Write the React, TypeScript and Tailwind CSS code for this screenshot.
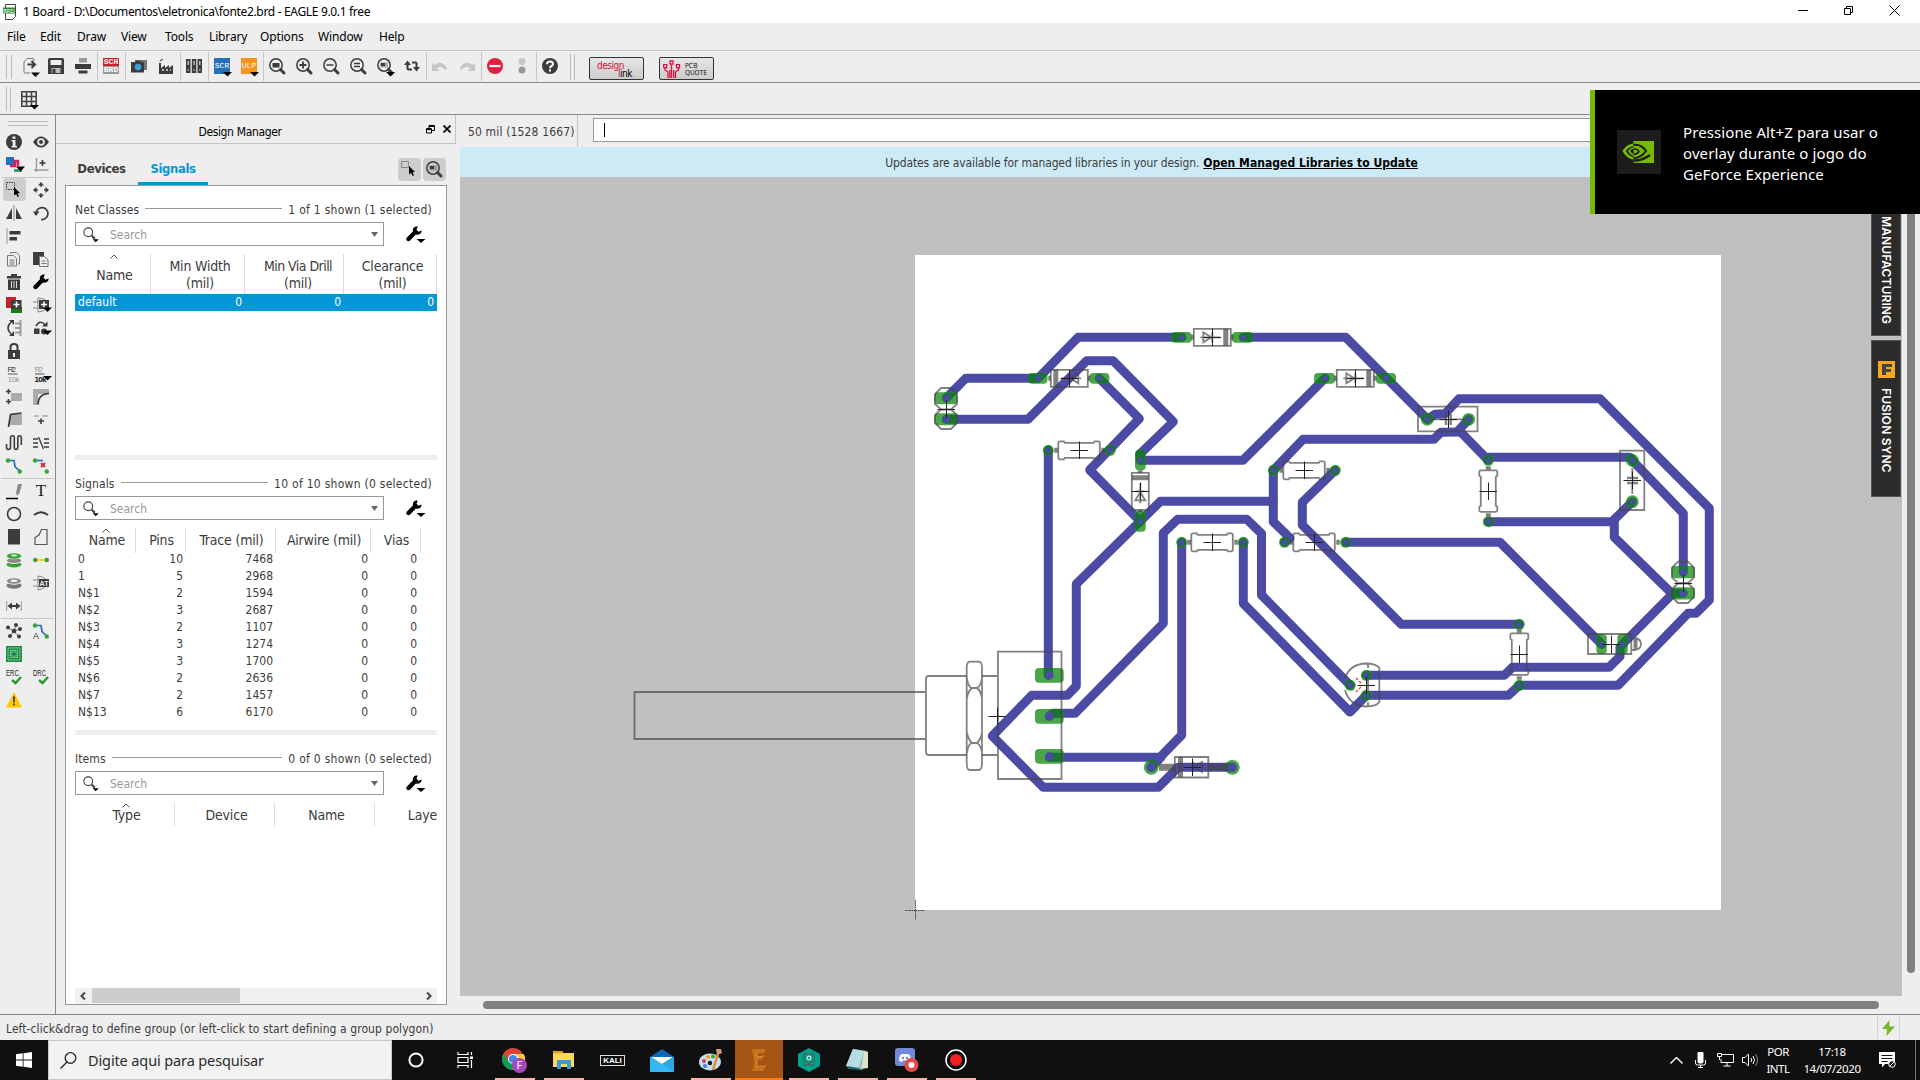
import React from "react";

type Kids = { children?: React.ReactNode };

const I = ({ children, s = 16 }: Kids & { s?: number }) => (
  <svg width={s} height={s} viewBox="0 0 16 16" className="block shrink-0 overflow-visible" fill="none">
    {children}
  </svg>
);
const Drop = () => <path d="M9 14h9l-4.5 4.5z" fill="#000" />;
const K = "#3c3c3c";

/* ---------- main toolbar ---------- */
const Lens = ({ children }: Kids) => (
  <>
    <circle cx="7" cy="7" r="6.2" stroke={K} strokeWidth="1.5" />
    <path d="M11.5 11.5l3.5 3.5" stroke={K} strokeWidth="3" strokeLinecap="round" />
    {children}
  </>
);
const Undo = ({ flip }: { flip?: boolean }) => (
  <g transform={flip ? "translate(16 0) scale(-1 1)" : undefined}>
    <path d="M0 5v8h7.500l-2.500-2.800c2.500-2.200 6-1.500 8.500 2l1.500-2.200c-2.500-5-8-7-12.500-3z" fill="#c6c6c6" />
  </g>
);
type Btn = React.ReactNode | "|";
const toolbar: Btn[] = [
  <I key="export">
    <g transform="translate(2 0)">
      <path d="M11 3V1.500a1 1 0 0 0-1-1H4L1 4v10a1 1 0 0 0 1 1h5" stroke="#777" />
      <path d="M4.500 6.500h6M8.500 3l3.500 3.500-3.500 3.500" stroke={K} strokeWidth="2" />
      <path d="M8 14.500h9l-4.500 4.500z" fill="#000" />
    </g>
  </I>,
  <I key="save">
    <path d="M0 1.500Q0 0 1.500 0h13Q16 0 16 1.500V16H0z" fill={K} />
    <path d="M2.500 2h11v5h-11z" fill="#ededed" />
    <path d="M3.500 10h9v5h-9z" fill="#bbb" />
    <path d="M4.500 11h3v4h-3z" fill={K} />
  </I>,
  <I key="print">
    <path d="M4 0h8v4.500H4z" fill="#999" />
    <path d="M0 6h16v5H0zM3.500 12.500h9v3h-9z" fill={K} />
  </I>,
  "|",
  <div key="sch" className="flex h-4 w-4 flex-col font-['Liberation_Mono',monospace] text-[8px] leading-[8px] font-bold text-white">
    <span className="flex h-2 justify-center bg-[#c8202f]">SCH</span>
    <span className="flex h-2 justify-center bg-[#999]">BRD</span>
  </div>,
  "|",
  <I key="cam">
    <path d="M4 2h12v10H4z" fill="#777" />
    <path d="M0 4h4l1-1.500h4L10 4h3v10.500H0z" fill={K} />
    <circle cx="7" cy="9" r="3.300" fill="#35a0e0" />
  </I>,
  <I key="factory">
    <path d="M1 16V5h2v5l4-3v3l4-3v3l4-3v9z" fill={K} />
    <path d="M2 3.500Q2 1.500 5 1.500" stroke={K} />
    <path d="M4 12h2M8 12h2M12 12h1" stroke="#ddd" strokeWidth="1.500" />
  </I>,
  "|",
  <I key="lib">
    <path d="M0 1h4.500v14H0zM5.800 1h4.500v14H5.800zM11.500 1H16v14h-4.500z" fill={K} />
    <path d="M1.500 3h1.500v4H1.500zM7.300 3h1.500v4H7.300zM13 3h1.500v4H13z" fill="#bbb" />
    <path d="M2.200 11v2M8 11v2M13.800 11v2" stroke="#bbb" />
  </I>,
  "|",
  <div key="scr" className="relative flex h-4 w-4 items-center justify-center bg-[#2670b8] font-['Liberation_Mono',monospace] text-[8px] text-white">
    SCR
    <span className="absolute inset-0"><I><Drop /></I></span>
  </div>,
  <div key="ulp" className="relative flex h-4 w-4 items-center justify-center bg-[#f7931e] font-['Liberation_Mono',monospace] text-[8px] text-white">
    ULP
    <span className="absolute inset-0"><I><Drop /></I></span>
  </div>,
  "|",
  <I key="z1"><Lens><path d="M3.500 5h7v4.500h-7z" fill={K} /></Lens></I>,
  <I key="z2"><Lens><path d="M3.500 7h7M7 3.500v7" stroke={K} strokeWidth="1.800" /></Lens></I>,
  <I key="z3"><Lens><path d="M3.500 7h7" stroke={K} strokeWidth="1.500" /></Lens></I>,
  <I key="z4"><Lens><path d="M4 5.500h6M4 8.500h6" stroke={K} strokeWidth="1.500" /></Lens></I>,
  <I key="z5"><Lens><path d="M3 4.500h8v5H3z" fill="#aaa" /><path d="M4 5h4v3H4z" fill={K} /></Lens><Drop /></I>,
  <I key="ref">
    <path d="M3.500 5v5.500a1 1 0 0 0 1 1H8M12.500 11V5.500a1 1 0 0 0-1-1H8" stroke={K} strokeWidth="2" />
    <path d="M0 7l3.500-4.500L7 7zM9 9l3.500 4.500L16 9z" fill={K} />
  </I>,
  "|",
  <I key="undo"><Undo /></I>,
  <I key="redo"><Undo flip /></I>,
  "|",
  <I key="stop"><circle cx="8" cy="8" r="8" fill="#e0203c" /><path d="M2.500 8h11" stroke="#fff" strokeWidth="2.200" /></I>,
  <I key="go"><circle cx="8" cy="3.500" r="3.500" fill="#c6c6c6" /><circle cx="8" cy="12" r="3.500" fill="#999" /></I>,
  "|",
  <I key="help">
    <circle cx="8" cy="8" r="8" fill={K} />
    <path d="M5 6.200Q5 3.500 8 3.500T11 6Q11 7.200 9.500 8T8 10.200" stroke="#fff" strokeWidth="2" />
    <path d="M7 11.500h2v2H7z" fill="#fff" />
  </I>,
];

/* ---------- left palette ---------- */
const G = "#35a435";
const Wrench = () => (
  <path d="M15.500 4.500l-3 1.200-2-2L11.700.700C8.500 0 6.300 2.500 7 5.300L.700 11.800c-1.500 2 1 4.500 3.200 3l6-6.300c3 .800 6-1 5.600-4z" fill="#000" />
);
const p1: React.ReactNode[] = [
  <I key="0"><circle cx="8" cy="8" r="8" fill={K} /><path d="M6.500 2.500h3v2.300h-3zM5.500 6h4v6H11v1.500H5.500V12h1.200V7.500H5.500z" fill="#eee" /></I>,
  <I key="1"><path d="M0 8q8-11 16 0q-8 11-16 0z" fill={K} /><circle cx="8" cy="8" r="3.800" fill="#eee" /><circle cx="8" cy="8" r="2" fill={K} /></I>,
  <I key="2"><path d="M0 0h8v8H0z" fill="#2670b8" /><path d="M4 9h5V4h3v5" stroke="#d8205c" strokeWidth="2.500" /><path d="M8 13.500h8" stroke="#35a46a" strokeWidth="3" /><path d="M10 9.500h9l-4.500 5z" fill="#000" /></I>,
  <I key="3"><path d="M3.500 1v14M1 13h14.500" stroke="#999" strokeWidth="1.300" /><path d="M6.500 6h6M9.500 3v6" stroke={K} strokeWidth="1.600" /></I>,
];
const p2: React.ReactNode[] = [
  <I key="0"><path d="M.500 .500h8v7h-8z" stroke="#333" strokeDasharray="1.500 1" /><path d="M8 5l6 6-2.500.300 1.500 3-1.300.700-1.500-3L8 13.500z" fill="#000" /></I>,
  <I key="1"><path d="M8 0l3 3.500H5zM8 16l3-3.500H5zM0 8l3.500-3v6zM16 8l-3.500-3v6z" fill={K} /><path d="M8 2v3M8 11v3M2 8h3M11 8h3" stroke={K} strokeWidth="1.300" /></I>,
  <I key="2"><path d="M0 14L6 3v11zM16 14L10 3v11z" fill={K} /><path d="M8 0v16" stroke="#999" strokeWidth="1.200" /></I>,
  <I key="3"><path d="M3 8a6 6 0 1 1 5 6.500" stroke={K} strokeWidth="1.700" /><path d="M0 6.500h6.500L3 11z" fill={K} /></I>,
  <I key="4"><path d="M1 0v16" stroke="#999" /><path d="M3.500 3h11v3.500h-11zM3.500 9h7.500v3.500H3.500z" fill={K} /></I>,
  null,
  <I key="6"><path d="M4.500 3V1.500h6l3 3V13H12" stroke="#777" /><path d="M1.500 4.500h6l3 3V15h-9zM3.500 9h5M3.500 11h5M3.500 13h5" stroke="#777" /></I>,
  <I key="7"><path d="M0 1h11v5H6v8H0z" fill={K} /><path d="M6.500 5.500h5l3.500 3.500v6.500H6.500z" fill="#eee" stroke="#777" /><path d="M8.500 10h4M8.500 12.500h5" stroke="#777" /></I>,
  <I key="8"><path d="M1 2h14v2.500H1zM5 0h6v2H5zM2 5.500h12V16H2z" fill={K} /><path d="M5.500 7v7M8 7v7M10.500 7v7" stroke="#ddd" /></I>,
  <I key="9"><Wrench /></I>,
  <I key="10"><path d="M0 0h10v11H0z" fill="#c8202f" /><path d="M5 10h11v6H5z" fill="#1d7a1d" /><path d="M5 3h10.500v9H5z" fill={K} /><path d="M7.500 7.500h6M10.500 4.500v6" stroke="#fff" strokeWidth="1.500" /></I>,
  <I key="11"><path d="M5 1q11 1 10 7-1 6-10 7zM0 5h5M0 11h5" stroke="#888" /><path d="M6 3h10v9H6z" fill={K} /><path d="M8 7.500h6M11 4.500v6" stroke="#fff" strokeWidth="1.500" /><path d="M10 10.500h9L14.500 15z" fill="#000" /></I>,
  <I key="12"><path d="M5 2Q-1 8 5 14" stroke={K} strokeWidth="1.700" /><path d="M3 0h5v5zM3 16h5v-5z" fill={K} /><path d="M14.500 0v16M9 3.500h5M9 8h5M9 12.500h5" stroke="#999" strokeWidth="2" /></I>,
  <I key="13"><path d="M3 6q4-7 9-1" stroke={K} strokeWidth="1.700" /><path d="M9 6.500h5.500V1.500zM1 8.500h5.500V14H1z" fill={K} /><circle cx="11" cy="11.500" r="3" fill={K} /><path d="M10 10.500h9L14.500 15z" fill="#000" /></I>,
  <I key="14"><path d="M2 7h12v9H2z" fill={K} /><path d="M4.500 8V4q0-3 3.500-3t3.500 3v4" stroke={K} strokeWidth="2" /><path d="M7 10h2v4H7z" fill="#eee" /></I>,
  null,
  <I key="16"><text x="1.500" y="6" fontSize="8" fill="#333" textLength="8.500" fontFamily="Liberation Sans">R2</text><path d="M2 8h9.500" stroke="#555" /><text x="1.500" y="16" fontSize="8" fill="#999" textLength="12" fontFamily="Liberation Sans">10k</text></I>,
  <I key="17"><text x="1.500" y="6" fontSize="8" fill="#999" textLength="8.500" fontFamily="Liberation Sans">R2</text><path d="M2 8h9.500" stroke="#555" /><text x="1.500" y="16" fontSize="8" fill="#111" textLength="12" fontFamily="Liberation Sans" fontWeight="700">10k</text><path d="M10 10h9l-4.500 4.500z" fill="#000" /></I>,
  <I key="18"><path d="M2.500 0v5M0 2.500h5M2.500 10v5M0 12.500h5" stroke={K} strokeWidth="1.500" /><path d="M5 4h11v8H5z" fill="#aaa" /></I>,
  <I key="19"><path d="M0 0h16v5H5v11H0z" fill="#aaa" /><path d="M5 15.500Q5 5 16 4.500" stroke={K} strokeWidth="1.700" /></I>,
  <I key="20"><path d="M5 2h11v11H3z" fill="#aaa" /><path d="M2.500 15l2-12.500L15.500 1" stroke={K} strokeWidth="1.700" /></I>,
  <I key="21"><path d="M1 4h5M9 4h6" stroke="#aaa" strokeWidth="1.300" /><path d="M8 6.500v5.500M5 9h6" stroke={K} strokeWidth="1.600" /></I>,
  <I key="22"><path d="M.500 9v3q0 2.500 2 2.500t2-2.500V3Q4.500.800 6.500.800T8.300 3v9q0 2.500 1.700 2.500t1.800-2.500V3Q11.800.800 13.500.800T15.300 3v7" stroke={K} strokeWidth="1.600" /></I>,
  <I key="23"><path d="M0 4h5M0 8h5M0 12h5M11 4h5M11 8h5M11 12h5M5.500 2l5 12" stroke={K} strokeWidth="1.300" /></I>,
  <I key="24"><path d="M2 2.500h6l1 6 4.500 4.500" stroke="#2670c0" strokeWidth="1.700" /><circle cx="2" cy="2.500" r="2.200" fill={G} /><circle cx="13.800" cy="13.500" r="2.200" fill={G} /></I>,
  <I key="25"><path d="M2 2.500h8" stroke="#2670c0" strokeWidth="1.700" /><path d="M8 5l4 4M12 5l-4 4" stroke="#d8203c" strokeWidth="1.800" /><circle cx="2" cy="2.500" r="2.200" fill={G} /><circle cx="13.800" cy="13.500" r="2.200" fill={G} /></I>,
];
const p3: React.ReactNode[] = [
  <I key="0"><path d="M0 15.500h12" stroke="#000" strokeWidth="1.500" /><path d="M12 1h4l-2.500 9-2.500 3-1-3z" fill="#888" /></I>,
  <span key="1" className="font-['Liberation_Serif',serif] text-[17px] leading-none text-[#222]">T</span>,
  <I key="2"><circle cx="8" cy="8" r="6.500" stroke={K} strokeWidth="1.600" /></I>,
  <I key="3"><path d="M1 9Q8 3.500 15 9" stroke={K} strokeWidth="2" /></I>,
  <I key="4"><path d="M2 0h12v15.500H2z" fill={K} /></I>,
  <I key="5"><path d="M2 15.500V8.500L6 6l2.500-5.500H14v15z" stroke="#555" strokeWidth="1.200" /></I>,
  <I key="6"><ellipse cx="8" cy="12.500" rx="7.500" ry="3" fill={G} /><ellipse cx="8" cy="8.500" rx="7.500" ry="3" fill="#888" stroke="#eee" /><ellipse cx="8" cy="4" rx="7.500" ry="3" fill={G} stroke="#eee" strokeWidth=".5" /><ellipse cx="8" cy="3.600" rx="3" ry="1" fill="#dfd" /></I>,
  <I key="7"><path d="M3 8h10" stroke="#ffd000" strokeWidth="1.800" /><circle cx="2.200" cy="8" r="2.200" fill={G} /><circle cx="13.800" cy="8" r="2.200" fill={G} /></I>,
  <I key="8"><ellipse cx="8" cy="10.500" rx="7.500" ry="3.300" fill="#777" /><ellipse cx="8" cy="6" rx="7.500" ry="3.300" fill="#888" stroke="#eee" /><ellipse cx="8" cy="5.800" rx="3.500" ry="1.200" fill="#eee" /></I>,
  <I key="9"><path d="M5 1q9 1 9 7-1 6-9 7zM0 5h6M0 11h6" stroke="#888" /><path d="M6 4h10v8H6z" fill={K} /><text x="11" y="10.500" textAnchor="middle" fontSize="7" fontWeight="700" fill="#eee" fontFamily="Liberation Sans">AT</text></I>,
  <I key="10"><path d="M.700 3v10M15.300 3v10" stroke="#999" /><path d="M3 8h10" stroke={K} strokeWidth="2" /><path d="M1.500 8l4.500-3.500v7zM14.500 8L10 4.500v7z" fill={K} /></I>,
  null,
];
const p4: React.ReactNode[] = [
  <I key="0"><path d="M8 8L2 5M8 8L10 2M8 8l6-2M8 8l5 6M8 8l-4 5" stroke={K} strokeWidth=".7" /><g fill={K}><circle cx="8" cy="8" r="2.300" /><circle cx="2" cy="4.500" r="2" /><circle cx="10" cy="2" r="2" /><circle cx="14" cy="6" r="2" /><circle cx="13" cy="13.500" r="2" /><circle cx="4" cy="13" r="2" /></g></I>,
  <I key="1"><path d="M2 2.500h6l1 6 4.500 4.500" stroke="#2670c0" strokeWidth="1.700" /><circle cx="2" cy="2.500" r="2.200" fill={G} /><circle cx="13.800" cy="13.500" r="2.200" fill={G} /><text x="0" y="16" fontSize="9" fill="#333" fontFamily="Liberation Sans">A</text></I>,
  <I key="2"><path d="M0 0h16v16H0z" fill="#1f8a43" /><path d="M2 2h12v12H2zM4.500 4.500h7v7h-7z" stroke="#cfe" strokeWidth=".8" strokeDasharray="1 .6" /><path d="M6 6h4v4H6z" fill="#1a6a33" stroke="#9fc" strokeWidth=".5" /></I>,
  null,
  <I key="4"><text x="0" y="6.500" fontSize="8.500" fill="#222" textLength="13" lengthAdjust="spacingAndGlyphs" fontFamily="Liberation Sans">ERC</text><path d="M6 11l3.500 3L15 8" stroke="#2a9a2a" strokeWidth="2.500" /></I>,
  <I key="5"><text x="0" y="6.500" fontSize="8.500" fill="#222" textLength="13" lengthAdjust="spacingAndGlyphs" fontFamily="Liberation Sans">DRC</text><path d="M6 11l3.500 3L15 8" stroke="#2a9a2a" strokeWidth="2.500" /></I>,
  <I key="6"><path d="M8 0l8 15.500H0z" fill="#fcc800" /><path d="M7 4.500h2l-.3 6H7.300zM7.200 11.500h1.600V13.500H7.200z" fill="#333" /></I>,
];
const Pal = ({ items, active }: { items: React.ReactNode[]; active?: boolean }) => (
  <div className="grid grid-cols-[23px_23px] gap-x-1 pl-[3px]">
    {items.map((it, i) => (
      <div key={i} className={active && i === 0 ? "flex h-[23px] items-center justify-center rounded-sm bg-[#cdcdcd] pr-px" : "flex h-[23px] items-center justify-center pr-px"}>{it}</div>
    ))}
  </div>
);

/* ---------- dock ---------- */
const Head = ({ title, info }: { title: string; info: string }) => (
  <div className="flex h-[22px] items-center text-[12px]">
    <span className="tracking-[0.1px]">{title}</span>
    <span className="mx-1.5 mb-1 h-px flex-1 bg-[#999]" />
    <span className="mr-[5px] tracking-[0.27px]">{info}</span>
  </div>
);
const Search = () => (
  <div className="flex h-6 items-center">
    <div className="flex h-6 w-[309px] items-center border border-[#999] bg-white pr-[5px] pl-[7px]">
      <I s={14}>
        <circle cx="6" cy="6" r="5" stroke="#444" strokeWidth="1.300" />
        <path d="M10 10l3.500 3.500" stroke="#444" strokeWidth="2.500" />
        <path d="M11 14h7l-3.500 3.500z" fill="#000" />
      </I>
      <span className="ml-[13px] flex-1 pt-px text-[12px] text-[#999]">Search</span>
      <svg width="7" height="5" viewBox="0 0 7 5"><path d="M0 0h7L3.500 5z" fill="#666" /></svg>
    </div>
    <span className="ml-[22px]"><I><Wrench /><path d="M10.500 13h9L15 17z" fill="#000" /></I></span>
  </div>
);
const Caret = () => (
  <svg width="8" height="5" viewBox="0 0 8 5" className="absolute top-0 left-1/2 -ml-[3px]"><path d="M.5 4.500L4 1l3.500 3.500" stroke="#555" fill="none" /></svg>
);
const signals = [
  ["0", 10, 7468], ["1", 5, 2968], ["N$1", 2, 1594], ["N$2", 3, 2687], ["N$3", 2, 1107],
  ["N$4", 3, 1274], ["N$5", 3, 1700], ["N$6", 2, 2636], ["N$7", 2, 1457], ["N$13", 6, 6170],
];

const Dock = () => (
  <div className="flex w-[404px] shrink-0 flex-col">
    <div className="flex h-[29px] w-[400px] items-center border-r border-b border-[#c4c4c4] pt-1">
      <span className="flex-1 pt-px pl-[98px] text-center text-[12px] tracking-[-0.35px] text-black">Design Manager</span>
      <span className="mb-1 ml-[100px]"><svg width="9" height="9" viewBox="0 0 9 9" fill="none" stroke="#000"><path d="M.5 3.500h5v4.500h-5zM.5 4.500h5M3 3V.500h5.500v5H6M3 1.500h5.500" /></svg></span>
      <span className="mr-1 mb-1 ml-2"><svg width="8" height="8" viewBox="0 0 8 8" stroke="#000" strokeWidth="1.600"><path d="M.5 .5l7 7M7.500 .5l-7 7" /></svg></span>
    </div>
    <div className="flex h-[41px] items-end pr-[14px] pl-[9px]">
      <span className="flex h-[31px] w-[73px] items-center justify-center pb-0.5 text-[13px] font-bold tracking-[-0.4px]">Devices</span>
      <span className="flex h-[31px] w-[70px] items-center justify-center border-b-[3px] border-[#0696d7] pt-px text-[13px] font-bold tracking-[-0.4px] text-[#0696d7]">Signals</span>
      <span className="flex-1" />
      <span className="mb-1 flex h-[23px] w-[23px] items-center justify-center rounded-sm bg-[#cdcdcd] pr-px pb-px"><I><path d="M.500 .500h7v6h-7z" stroke="#888" /><path d="M8 5l6 6-2.500.300 1.500 3-1.300.700-1.500-3L8 13.500z" fill="#000" /></I></span>
      <span className="mb-1 ml-0.5 flex h-[23px] w-[23px] items-center justify-center rounded-sm bg-[#cdcdcd] pr-px pb-px"><I><Lens><path d="M3 4.500h8v5H3z" fill="#999" /><path d="M4 5h4v3H4z" fill={K} /></Lens></I></span>
    </div>
    <div className="ml-[9px] flex h-[820px] w-[382px] flex-col border border-[#999] bg-white pr-[9px] pl-[9px] text-[#3c3c3c]">
      <div className="mt-[13px]"><Head title="Net Classes" info="1 of 1 shown (1 selected)" /></div>
      <div className="mt-[1px]"><Search /></div>
      <div className="mt-2 grid h-10 grid-cols-[76px_94px_99px_93px] text-center text-[14px] leading-[17px] tracking-[-0.2px]">
        <div className="relative border-r border-[#ddd] pt-[13px] pl-1">Name<Caret /></div>
        <div className="border-r border-[#ddd] pt-1 pl-[5px]">Min Width<br />(mil)</div>
        <div className="border-r border-[#ddd] pt-1 pl-2"><span className="tracking-[-0.55px]">Min Via Drill</span><br />(mil)</div>
        <div className="border-r border-[#ddd] pt-1 pl-[5px]">Clearance<br />(mil)</div>
      </div>
      <div className="grid h-[17px] grid-cols-[76px_94px_99px_93px] bg-[#0696d7] text-right text-[12px] leading-[16px] text-white">
        <span className="pl-[3px] text-left tracking-[0.1px]">default</span><span className="pr-[3px]">0</span><span className="pr-[3px]">0</span><span className="pr-[3px]">0</span>
      </div>
      <div className="mt-[144px] h-[5px] bg-[#eee]" />
      <div className="mt-[13px]"><Head title="Signals" info="10 of 10 shown (0 selected)" /></div>
      <div className="mt-[1px]"><Search /></div>
      <div className="mt-2 grid h-[23px] grid-cols-[61px_50px_90px_95px_50px] text-center text-[14px] leading-[25px] tracking-[-0.2px]">
        <div className="relative border-r border-[#ddd] pl-1">Name<Caret /></div>
        <div className="border-r border-[#ddd] pl-0.5">Pins</div>
        <div className="border-r border-[#ddd] pl-0.5">Trace (mil)</div>
        <div className="border-r border-[#ddd] pl-0.5">Airwire (mil)</div>
        <div className="border-r border-[#ddd] pl-0.5">Vias</div>
      </div>
      <div className="flex h-[170px] flex-col text-[12px] leading-[17px]">
        {signals.map(([n, p, t]) => (
          <div key={n} className="grid h-[17px] grid-cols-[61px_50px_90px_95px_50px] text-right">
            <span className="pl-[3px] text-left">{n}</span><span className="pr-[3px]">{p}</span><span className="pr-[3px]">{t}</span><span className="pr-[3px]">0</span><span className="pr-1">0</span>
          </div>
        ))}
      </div>
      <div className="mt-[9px] h-[5px] bg-[#eee]" />
      <div className="mt-[13px]"><Head title="Items" info="0 of 0 shown (0 selected)" /></div>
      <div className="mt-[1px]"><Search /></div>
      <div className="mt-2 flex h-[23px] text-center text-[14px] leading-[24px] tracking-[-0.2px]">
        <div className="relative w-[100px] shrink-0 border-r border-[#ddd] pl-1">Type<Caret /></div>
        <div className="w-[100px] shrink-0 border-r border-[#ddd] pl-1">Device</div>
        <div className="w-[100px] shrink-0 border-r border-[#ddd] pl-1">Name</div>
        <div className="flex-1 text-right">Laye</div>
      </div>
      <div className="mt-auto flex h-4 items-center bg-[#f0f0f0] px-[5px] pb-px">
        <svg width="6" height="8" viewBox="0 0 6 8"><path d="M5 .5L1.500 4 5 7.500" stroke="#444" strokeWidth="2" fill="none" /></svg>
        <span className="ml-1.5 h-[15px] w-[148px] bg-[#cdcdcd]" />
        <span className="flex-1" />
        <svg width="6" height="8" viewBox="0 0 6 8"><path d="M1 .5L4.500 4 1 7.500" stroke="#444" strokeWidth="2" fill="none" /></svg>
      </div>
    </div>
  </div>
);

/* ---------- board drawing ---------- */
const traces = [
  "946.3,398 965.7,378.3 1038,378.3 1078,337.3 1182,337.3",
  "1243.3,337.3 1345.7,337.3 1427.5,419.3",
  "946.3,419.3 1028,419.3 1086.7,360.7 1113,360.7 1173.3,421.7 1140,454 1140,460.3 1243,460.3 1325,378.3",
  "1099.3,378.3 1139.3,418.7 1089.7,470 1140.3,521.3",
  "1273.3,501.3 1160.5,501.3 1076.3,584 1076.3,686 1067.3,695.3 1031.7,695.3 992.3,736 1043.3,787.3 1158.3,787.3 1178.3,767.3 1232.3,767.3",
  "1048.3,450.3 1048.3,675.3",
  "1049.3,716.3 1053,713.3 1075,713.3 1163.3,623.3 1163.3,533 1177.7,519.3 1246.7,519.3 1261.5,533.5 1261.5,595 1350.3,685.3",
  "1049.3,757.3 1160,757.3 1181.7,735 1181.7,542.3",
  "1151,767.3 1161,757.3",
  "1243.3,542.3 1243.3,603.5 1350,712 1366.3,695.3 1508.5,695.3 1519.3,685.3 1618,685.3 1688,613.3 1696,613.3 1709.3,600 1709.3,508.3 1600,398.7 1459,398.7 1445,413.8 1435,414.3 1427.3,419.3",
  "1366.3,675.3 1504.3,675.3 1512.5,667.3 1609,667.3 1620,656.5 1620,647 1622.3,644.3 1673,593.3 1683.3,593.3",
  "1671.7,593.3 1614.3,537.3 1614.3,521.7",
  "1488.3,521.7 1612,521.7 1632.3,501.7",
  "1488.3,457.3 1630,457.3 1632.3,460.3 1683.3,513.3 1683.3,572.3",
  "1468.7,419.3 1458,431 1461,432.3 1488.3,460.3",
  "1460,432 1441,432.3 1434,439.3 1303,439.3 1273.3,470.3 1273.3,521.7 1290,538 1284.5,542.3",
  "1335.3,470.3 1302.3,502.3 1302.3,525 1401.3,624.3 1519.3,624.3",
  "1345.7,542.3 1500,542.3 1601.7,644.3",
];
/* x, y, radius */
const roundPads = [
  [1048.3, 450.3, 5.5], [1110.3, 450.3, 5.5], [1273.3, 470.3, 5.5], [1335.3, 470.3, 5.5], [1181.7, 542.3, 5.5],
  [1243.3, 542.3, 5.5], [1284.5, 542.3, 5.5], [1345.7, 542.3, 5.5], [1488.3, 460.3, 5.5], [1488.3, 521.7, 5.5],
  [1519.3, 624.3, 5.5], [1519.3, 685.3, 5.5], [1350.3, 685.3, 5.5], [1366.3, 675.3, 5.5], [1366.3, 695.3, 5.5],
  [1427.3, 419.3, 6.4], [1468.7, 419.3, 6.4], [1632.3, 460.3, 6.4], [1632.3, 501.7, 6.4], [1151.2, 767.3, 7.4], [1232.3, 767.3, 7.4],
];
/* x, y, width, height, hole x, hole y */
const longPads = [
  [1171.3, 332, 20.5, 10.700, 1181.7, 337.3], [1232, 332, 21, 10.700, 1243.3, 337.3],
  [1028, 373, 19.500, 10.700, 1038.3, 378.3], [1089.3, 373, 20, 10.700, 1099.3, 378.3],
  [1314, 373, 21, 10.700, 1325.3, 378.3], [1376, 373, 20, 10.700, 1386.3, 378.3],
  [1135, 449.7, 10.700, 20.500, 1140.3, 460.3], [1135, 511, 10.700, 20.700, 1140.3, 521.3],
  [934.3, 392.3, 23.300, 12, 946.3, 398.3], [934.3, 413.3, 23.300, 12, 946.3, 419.3],
  [1671.3, 566, 23.500, 12.300, 1683.3, 572.3], [1671.3, 587.3, 23.500, 12.300, 1683.3, 593.3],
  [1035, 668, 28.700, 14.700, 1049.3, 675.3], [1035, 709, 28.700, 14.700, 1049.3, 716.3], [1035, 749, 28.700, 14.700, 1049.3, 756.500],
  [1596.3, 634, 10.500, 20, 1601.7, 644.3], [1617.3, 634, 10.500, 20, 1622.3, 644.3],
];
const Pads = () => (
  <>
    {roundPads.map(([x, y, r], i) => <circle key={i} cx={x} cy={y} r={r} />)}
    {longPads.map(([x, y, w, h], i) => <rect key={i} x={x} y={y} width={w} height={h} rx="4" />)}
  </>
);
const Lines = ({ c }: { c: string }) => (
  <g stroke={c} strokeWidth="9" fill="none" strokeLinejoin="round" strokeLinecap="round">
    {traces.map((t, i) => <polyline key={i} points={t} />)}
  </g>
);
const Resistor = ({ x, y, v }: { x: number; y: number; v?: boolean }) => (
  <g transform={`translate(${x} ${y})${v ? " rotate(90)" : ""}`}>
    <path d="M-21-7.500q0-1.500 1.500-1.500h4l1 1.500h29l1-1.500h3.500q1.500 0 1.500 1.500v15q0 1.500-1.500 1.500h-3.500l-1-1.500h-29l-1 1.500h-4q-1.500 0-1.500-1.500z" />
    <path d="M-25 0h3.500M22 0h3.500" strokeWidth="5" />
  </g>
);
const Diode = ({ x, y, r = 0 }: { x: number; y: number; r?: number }) => (
  <g transform={`translate(${x} ${y}) rotate(${r})`}>
    <path d="M-18.500-8.500h37v17h-37zM-9-5v10l8-5zM0-5V5M-12 0h20" />
    <path d="M13.500-8.500v17M-21 0h2.500M18.500 0h2.500" strokeWidth="5" />
  </g>
);
const crosses = [
  [946.3, 409.3], [1212.3, 337.3], [1069.3, 378.3], [1355.3, 378.3], [1140.3, 491.3], [1079.3, 450.3], [1304.3, 470.3],
  [1212.3, 542.3], [1314.3, 542.3], [1488.3, 491.3], [1519.3, 654.3], [1448.3, 419.3], [1632.3, 480.3], [1683.3, 583.3],
  [1611.3, 644.3], [1366.3, 685.3], [997.3, 716.3], [1192.3, 767.3],
];
const Board = () => (
  <svg width="1442" height="819" viewBox="460 177 1442 819" className="block">
    <defs><clipPath id="pads"><Pads /></clipPath></defs>
    <rect x="915" y="255" width="806" height="655" fill="#fff" />
    <Lines c="#4b4ba5" />
    <g fill="#4ba54b"><Pads /></g>
    <g clipPath="url(#pads)"><Lines c="#197331" /></g>
    <g stroke="#464646" strokeOpacity=".68" strokeWidth="1.800" fill="none">
      <Resistor x={1079.3} y={450.3} /><Resistor x={1304.3} y={470.3} /><Resistor x={1212.3} y={542.3} />
      <Resistor x={1314.3} y={542.3} /><Resistor x={1488.3} y={491.3} v /><Resistor x={1519.3} y={654.3} v />
      <Diode x={1212.3} y={337.3} /><Diode x={1069.3} y={378.3} r={180} /><Diode x={1355.3} y={378.3} /><Diode x={1140.3} y={491.3} r={-90} />
      <path d="M1174.800 757h33.500v20.500h-33.500zM1202 762v10l-8-5zM1193 762v10" />
      <path d="M1159 767.3h16M1208.300 767.3h20" strokeWidth="7" />
      <path d="M1180.500 757v20.500" strokeWidth="5" />
      <path d="M1418 406.700h59.500v24.600H1418zM1432 419.300h13M1452 419.300h12M1620 450.700h24.300v59.300H1620zM1632.300 468v9M1632.300 484v10" />
      <path d="M1446 414v11M1450.700 414v11M1627 478h11M1627 483h11" strokeWidth="2.500" />
      <path d="M1588 634h43.300v20H1588zM1632 638h3q6 1 6 6t-6 6h-3" />
      <path d="M1635.500 639v10" strokeWidth="4" />
      <path d="M1345 678q5-14 21-14.500 10 0 13.300 4.500v34q-3 4.500-13.300 4.500-17-1-21-16.500M1368 664v4M1368 702v4M1368 680v10" />
      <path d="M941 388h10l6 6v10l-6 5.300h-10l-6-5.300v-10zM941 409.500h10l6 5.500v8l-6 6h-10l-6-6v-8z" />
      <path d="M1678 561.700h10l6 6v10l-6 5.300h-10l-6-5.300v-10zM1678 583.500h10l6 5.500v8l-6 6h-10l-6-6v-8z" />
      <path d="M998 651.700h63.500V779H998zM926 692H634.500v47H926M966.700 676H929q-3 0-3 3v73q0 3 3 3h37.700M982 676h16M982 755h16" />
      <path d="M966.700 668q0-6 3-6.300h9q3.300 0 3.300 6.300v95q0 7-3.300 7h-9q-3 0-3-7zM967 678q1 9 5 10h5q4-2 5-10M967 753q1-9 5-10h5q4 2 5 10M972 688q-4 3-5 10M977 688q4 3 5 10M972 743q-4-4-5-10M977 743q4-4 5-10" />
    </g>
    <g fill="#4b4ba5">
      {roundPads.map(([x, y, r], i) => <circle key={i} cx={x} cy={y} r={r > 7 ? 4.500 : 2.900} />)}
      {longPads.map(([, , w, , x, y], i) => <circle key={i} cx={x} cy={y} r={w > 28 ? 4.300 : w > 22 ? 3.600 : 2.900} />)}
    </g>
    <g stroke="#222" strokeWidth="1">
      {crosses.map(([x, y], i) => <path key={i} d={`M${Math.round(x) - 8.5} ${Math.round(y) + 0.5}h17.500M${Math.round(x) + 0.5} ${Math.round(y) - 8.5}v17.500`} />)}
    </g>
    <path d="M1356 678l5 5M1361 687l-5 5" stroke="#ff3020" strokeWidth="1.200" strokeDasharray="3 1.500" />
    <path d="M905 910.500h20M915.500 900v20" stroke="#444" strokeDasharray="1.500 .7" />
  </svg>
);

/* ---------- taskbar ---------- */
const apps: { el: React.ReactNode; on?: boolean; active?: boolean }[] = [
  { on: true, el: <svg width="25" height="25" viewBox="0 0 25 25"><circle cx="11" cy="11" r="11" fill="#db4437" /><path d="M1.500 5.500A11 11 0 0 0 11 22l5-8H7z" fill="#0f9d58" /><path d="M11 6h10.800A11 11 0 0 1 11 22l5-8z" fill="#ffcd40" /><circle cx="11" cy="11" r="5" fill="#fff" /><circle cx="11" cy="11" r="4" fill="#4285f4" /><circle cx="17.500" cy="17.500" r="7.500" fill="#ab47bc" /><text x="17.500" y="21.300" textAnchor="middle" fontSize="10" fill="#fff" fontFamily="Roboto">F</text></svg> },
  { on: true, el: <svg width="22" height="20" viewBox="0 0 22 20"><path d="M0 1h9l1.500 2H21v14H0z" fill="#ffd75e" /><path d="M0 1h9l1.500 2.500H0z" fill="#e8a21c" /><path d="M4 19v-9h14v9h-4v-5H8v5z" fill="#3c9ad8" /></svg> },
  { el: <span className="border border-[#ddd] px-0.5 font-['Liberation_Sans',sans-serif] text-[8px] leading-[9px] font-bold text-white">KALI</span> },
  { el: <svg width="24" height="23" viewBox="0 0 24 23"><path d="M0 8l12-8 12 8v14H0z" fill="#0b67b8" /><path d="M0 8l12 7 12-7v15H0z" fill="#28a8ea" /><path d="M0 8.300L14 16l10 7H0z" fill="#33b8f5" /><path d="M1 8h22l-11 7z" fill="#fff" /></svg> },
  { on: true, el: <svg width="24" height="24" viewBox="0 0 24 24"><ellipse cx="11" cy="14" rx="11" ry="8.500" fill="#c4dff0" /><circle cx="5" cy="13" r="2" fill="#e04040" /><circle cx="9" cy="9" r="2" fill="#f0a020" /><circle cx="14" cy="8.500" r="2" fill="#40a040" /><circle cx="11" cy="15" r="2.200" fill="#111" /><circle cx="6" cy="18" r="2" fill="#4080e0" /><path d="M14 22l5-16" stroke="#e08830" strokeWidth="2.500" /><path d="M17 1h5l1 4-5 2z" fill="#d0a070" /></svg> },
  { on: true, active: true, el: <svg width="16" height="24" viewBox="0 0 16 24"><path d="M1 1h14l-2 4H6v4l7-1-3 4H6v7q4 1 9-1l-3 5H1q3-5 2-11T1 1z" fill="#c9711c" /><path d="M6 5v4l7-1M6 12v7l9-1" stroke="#f0a040" fill="none" strokeWidth=".7" /></svg> },
  { on: true, el: <svg width="22" height="24" viewBox="0 0 22 24"><path d="M11 0l11 6v12l-11 6L0 18V6z" fill="#00a38a" /><path d="M6 6h10v8H6zM5 17h12M11 14v3" stroke="#555" strokeWidth="1.200" fill="none" /><circle cx="11" cy="10" r="2" stroke="#fff" fill="none" /></svg> },
  { on: true, el: <svg width="23" height="24" viewBox="0 0 23 24"><path d="M7 1l14 2-5 19L0 18z" fill="#7fb9c4" /><path d="M7 1l11 2-5 17L0 18z" fill="#b8dde0" /><path d="M18 3l4 1v16l-7 1z" fill="#e0ddc8" /><path d="M0 18l13 2 1 2-12-1z" fill="#28606c" /></svg> },
  { on: true, el: <svg width="24" height="24" viewBox="0 0 24 24"><path d="M0 3q0-3 3-3h14q3 0 3 3v15H3q-3 0-3-3z" fill="#7289da" /><path d="M4 13q0-6 3-7h6q3 1 3 7l-3 1-1-1.500H8L7 14z" fill="#fff" /><circle cx="8" cy="10" r="1.300" fill="#7289da" /><circle cx="12" cy="10" r="1.300" fill="#7289da" /><circle cx="16.500" cy="17" r="7" fill="#e8464a" /><circle cx="16.500" cy="17" r="3" fill="#fff" /></svg> },
  { on: true, el: <svg width="22" height="22" viewBox="0 0 22 22"><circle cx="11" cy="11" r="10" fill="#0c0c0c" stroke="#fff" strokeWidth="1.500" /><circle cx="11" cy="11" r="6" fill="#f02020" /></svg> },
];
const Taskbar = () => (
  <div className="flex h-10 shrink-0 bg-[#101010] font-['Noto_Sans','Open_Sans',sans-serif] text-white">
    <div className="flex w-12 items-center justify-center"><svg width="16" height="16" viewBox="0 0 16 16" fill="#fff"><path d="M0 2.300L6.700 1.300v6.300H0zM7.500 1.200L16 0v7.600H7.500zM0 8.400h6.700v6.300L0 13.700zM7.500 8.400H16V16l-8.500-1.200z" /></svg></div>
    <div className="flex w-[344px] items-center border border-[#c8c8c8] bg-[#f2f2f2] pl-[11px] text-[#2b2b2b]">
      <svg width="17" height="17" viewBox="0 0 17 17" fill="none" stroke="#222" strokeWidth="1.300"><circle cx="10.500" cy="6" r="5.300" /><path d="M7 10l-6.500 6.500" /></svg>
      <span className="mt-0.5 ml-[11px] text-[14.5px] tracking-[-0.12px]">Digite aqui para pesquisar</span>
    </div>
    <div className="flex w-12 items-center justify-center"><svg width="16" height="16"><circle cx="8" cy="8" r="6.600" fill="none" stroke="#fff" strokeWidth="2" /></svg></div>
    <div className="flex w-[50px] items-center justify-center"><svg width="17" height="16" viewBox="0 0 17 16" fill="none" stroke="#fff" strokeWidth="1.200"><path d="M1 0v2.500h10V0M1 5.500h10v5H1zM1 16v-2.500h10V16M14.500 0v3M14.500 8v8" /><path d="M13 4.500h3v2.500h-3z" fill="#fff" stroke="none" /></svg></div>
    <div className="flex">
      {apps.map((a, i) => (
        <div key={i} className={a.active ? "flex w-[49px] flex-col items-center border-r border-[#101010] bg-[#a55615]" : "flex w-[49px] flex-col items-center"}>
          <div className="flex h-[38px] items-center justify-center pt-0.5">{a.el}</div>
          {a.on && <div className={a.active ? "h-0.5 w-full bg-[#ff7a10]" : "h-0.5 w-10 bg-[#ffb4a8]"} />}
        </div>
      ))}
    </div>
    <div className="ml-auto flex items-center">
      <svg width="13" height="7" viewBox="0 0 13 7" fill="none" stroke="#fff" strokeWidth="1.400"><path d="M.5 6.500l6-6 6 6" /></svg>
      <svg className="ml-3" width="11" height="16" viewBox="0 0 11 16" fill="none" stroke="#fff"><rect x="3" y="0" width="5" height="11" rx="1" fill="#fff" /><path d="M.500 8v3q0 2 2 2h6q2 0 2-2V8M5.500 13v2.500M3 15.500h5" /></svg>
      <svg className="ml-[11px]" width="17" height="14" viewBox="0 0 17 14" fill="none" stroke="#fff"><path d="M5 1.500h11.500v8H4V6M10 10v3M6.500 13h7M.5 .5h4v3h-4zM2.500 4v3" /></svg>
      <svg className="ml-2" width="17" height="14" viewBox="0 0 17 14" fill="none" stroke="#fff"><path d="M.500 4.500h2.500l3.500-3.500v12l-3.500-3.500H.500zM9 5q1.500 2 0 4M11 3q3 4 0 8" /><path d="M13.500 1q4 6 0 12" stroke="#888" /></svg>
      <div className="ml-[7px] flex w-6 flex-col items-center text-[11.5px] leading-[17px] tracking-[-0.5px]"><span>POR</span><span>INTL</span></div>
      <div className="ml-3 flex w-[60px] flex-col items-center text-[11.500px] leading-[17px] tracking-[-0.4px]"><span>17:18</span><span>14/07/2020</span></div>
      <svg className="ml-[17px]" width="18" height="16" viewBox="0 0 18 16"><path d="M0 0h16v12H6l-3 3.500V12H0z" fill="#fff" /><path d="M2.500 3.500h11M2.500 6.500h11M2.500 9.500h6" stroke="#111" /><circle cx="13" cy="12" r="3.300" fill="#111" stroke="#fff" /><path d="M11 14l4-4" stroke="#fff" /></svg>
      <span className="mr-1 ml-[18px] h-10 w-px bg-[#777]" />
    </div>
  </div>
);

export default function App() {
  return (
    <div className="relative flex h-[1080px] w-[1920px] flex-col overflow-hidden bg-[#eee] font-['DejaVu_Sans_Condensed','DejaVu_Sans',sans-serif] whitespace-nowrap text-[#3c3c3c]">
      <div className="flex h-[23px] shrink-0 items-center bg-white pl-[3px] text-black">
        <svg width="13" height="16" viewBox="0 0 13 16"><path d="M2.500.500h10v12l-3 3h-7z" fill="#fff" stroke="#444" /><path d="M0 3.500h12v6H0z" fill="#2a8a2a" /><text x="6" y="8.800" textAnchor="middle" fontSize="5.500" fill="#fff" fontFamily="Liberation Sans">BRD</text></svg>
        <span className="mt-px ml-[7px] flex-1 font-['Noto_Sans','Open_Sans',sans-serif] text-[12px] tracking-[-0.33px]">1 Board - D:\Documentos\eletronica\fonte2.brd - EAGLE 9.0.1 free</span>
        <svg width="102" height="11" viewBox="0 0 102 11" className="mr-5 mb-0.5" fill="none" stroke="#000"><path d="M0 5.500h10M46.500 3.500h6v6h-6zM48.500 3V1.500h6v6H53M91.500 .5l10 10M101.500 .5l-10 10" /></svg>
      </div>
      <div className="flex h-7 shrink-0 items-center border-b border-[#c8c8c8] pt-px pl-[7px] font-['Noto_Sans','Open_Sans',sans-serif] text-[12px] tracking-[-0.15px] text-black">
        {[["File", "w-[33px]"], ["Edit", "w-[37px]"], ["Draw", "w-[44px]"], ["View", "w-[44px]"], ["Tools", "w-[44px]"], ["Library", "w-[51px]"], ["Options", "w-[58px]"], ["Window", "w-[61px]"], ["Help", "w-[40px]"]].map(([t, w]) => <span key={t} className={w}>{t}</span>)}
      </div>
      <div className="flex h-8 shrink-0 items-center border-b border-[#888]">
        <div className="mr-1 ml-1.5 h-6 w-1.5 border-x border-[#bbb]" />
        {toolbar.map((b, i) => b === "|" ? <div key={i} className="h-[29px] w-px bg-[#c6c6c6]" /> : <div key={i} className="flex w-[27px] items-center justify-center pr-px pb-px">{b}</div>)}
        <div className="mr-3 ml-1.5 h-[26px] w-[5px] border-x border-[#bbb]" />
        <div className="relative mt-1 ml-0.5 h-[23px] w-[55px] rounded-[2px] border border-[#333] bg-gradient-to-b from-[#e6e6e6] to-[#cccccc] text-[10px] leading-[9px]">
          <span className="absolute top-[3px] left-[7px] tracking-[-0.5px] text-[#e0103c]">design</span>
          <span className="absolute top-[11px] left-[28px] tracking-[-0.5px] text-[#e0103c]">l<span className="text-black">ink</span></span>
        </div>
        <div className="mt-1 ml-[15px] flex h-[23px] w-[55px] items-center rounded-[2px] border border-[#333] bg-gradient-to-b from-[#e6e6e6] to-[#cccccc] pl-[3px]">
          <svg width="18" height="18" viewBox="0 0 18 18" fill="none" stroke="#e0103c" strokeWidth="1.300"><path d="M2 8v2l3 2v6M8.500 5v13M15.500 8v2l-3 2v6M6.800 10v8M10.700 10v8" /><path d="M.700 4.700h3v3h-3zM7 1h3v3H7zM13.500 4.700h3v3h-3z" fill="#fff" /></svg>
          <span className="mt-0.5 ml-1 flex flex-col text-[7px] leading-[7px] text-[#222]"><span>PCB</span><span>QUOTE</span></span>
        </div>
      </div>
      <div className="flex h-8 shrink-0 items-center border-b border-[#888]">
        <div className="mr-2.5 ml-1.5 h-6 w-[5px] border-x border-[#bbb]" />
        <I><path d="M.800.800h14.400v14.400H.800zM5.500.800v14.400M10.500.800v14.400M.800 5.500h14.400M.800 10.500h14.400" stroke="#444" strokeWidth="1.600" /><Drop /></I>
      </div>
      <div className="flex h-[900px] shrink-0 border-b border-[#888]">
        <div className="flex w-14 shrink-0 flex-col border-r border-[#888]">
          <div className="mt-1.5 mb-1 ml-2 h-[5px] w-10 border-y border-[#bbb]" />
          <Pal items={p1} />
          <div className="mx-px mt-px h-px bg-[#c8c8c8]" />
          <Pal items={p2} active />
          <div className="mx-px mt-px h-px bg-[#c8c8c8]" />
          <Pal items={p3} />
          <div className="mx-px mt-px h-px bg-[#c8c8c8]" />
          <Pal items={p4} />
        </div>
        <Dock />
        <div className="flex w-[1460px] flex-col">
          <div className="flex h-8 items-start">
            <span className="h-8 w-[118px] border-r border-[#c4c4c4] pl-2 text-[12px] leading-[34px] tracking-[0.15px]">50 mil (1528 1667)</span>
            <div className="mt-[3px] ml-[15px] flex h-6 flex-1 items-center border border-[#999] bg-white pl-2.5"><span className="h-3.5 w-px bg-black" /></div>
          </div>
          <div className="flex h-[849px]">
            <div className="flex w-[1442px] flex-col">
              <div className="flex h-[30px] items-center justify-center gap-1 bg-[#cdebf7] pt-px pr-[59px] text-[12px]">
                <span className="tracking-[-0.12px]">Updates are available for managed libraries in your design.</span>
                <span className="font-bold tracking-[0.05px] text-black underline">Open Managed Libraries to Update</span>
              </div>
              <div className="relative h-[819px] bg-[#c0c0c0]">
                <Board />
                <div className="absolute top-0 right-px flex w-[30px] flex-col gap-1 font-['Inter','Roboto',sans-serif] text-[12px] font-semibold text-white">
                  <div className="flex h-[159px] flex-col items-center justify-end border-x border-b border-[#555] bg-[#2b2b2b] pb-[11px]"><span className="tracking-[0.1px] [writing-mode:vertical-rl]">MANUFACTURING</span></div>
                  <div className="flex h-[157px] flex-col items-center border border-[#555] bg-[#2b2b2b] pt-5">
                    <svg width="17" height="17" viewBox="0 0 17 17"><path d="M0 0h17v17H0z" fill="#f5a623" /><path d="M4 14V3h10v3H8v2h5v3H8v3z" fill="#444" /></svg>
                    <span className="mt-2.5 tracking-[0.2px] [writing-mode:vertical-rl]">FUSION SYNC</span>
                  </div>
                </div>
              </div>
            </div>
            <div className="flex w-[18px] justify-center"><div className="h-[826px] w-2 rounded-full bg-[#808080]" /></div>
          </div>
          <div className="flex h-[18px] items-center pl-[23px]"><div className="h-2 w-[1396px] rounded-full bg-[#808080]" /></div>
        </div>
      </div>
      <div className="flex h-[25px] shrink-0 items-center pl-1.5 text-[12px]">
        <span className="flex-1 pt-0.5 tracking-[0.08px]">Left-click&amp;drag to define group (or left-click to start defining a group polygon)</span>
        <div className="mr-[20px] flex h-[23px] w-[23px] items-center justify-center border-x border-[#d4d4d4]"><svg width="13" height="16" viewBox="0 0 13 16"><path d="M7.500 0L0 9h5l-.500 7L13 6.500H7.500z" fill="#76b82a" /></svg></div>
      </div>
      <Taskbar />
      <div className="absolute top-[90px] right-0 flex h-[124px] w-[330px] items-center border-l-[5px] border-[#76b900] bg-black">
        <div className="ml-[22px] flex h-11 w-11 items-center justify-center bg-[#1c1c1c] pr-0.5">
          <svg width="32" height="22" viewBox="0 0 32 22">
            <path d="M11.500 0H32v22H11.500z" fill="#76b900" />
            <path d="M11.500 2.500C6 3 2 7 .5 10c2 4 6 8 11 8.500v-2.300C8 15.500 5 12.500 4 10c1.500-2.500 4-4.500 7.500-5z" fill="#76b900" />
            <path d="M11.500 3.800q8-.8 12.500 6.200-5 7-12.500 7.200" fill="none" stroke="#1c1c1c" strokeWidth="2" />
            <path d="M11.500 8q4-.5 5.500 2.500-2 3-5.500 2.800" fill="none" stroke="#1c1c1c" strokeWidth="1.500" />
            <path d="M11.500 7q-3 .500-4.500 3 1.500 3 4.500 4" fill="none" stroke="#76b900" strokeWidth="1.700" />
            <path d="M11.500 19.500q8 .500 16.500-5.500" fill="none" stroke="#1c1c1c" strokeWidth="2.500" />
          </svg>
        </div>
        <div className="mt-0.5 ml-[22px] flex flex-col font-['Noto_Sans','Open_Sans',sans-serif] text-[15px] leading-[21px] tracking-[0.1px] text-white">
          <span>Pressione Alt+Z para usar o</span><span>overlay durante o jogo do</span><span>GeForce Experience</span>
        </div>
      </div>
    </div>
  );
}
